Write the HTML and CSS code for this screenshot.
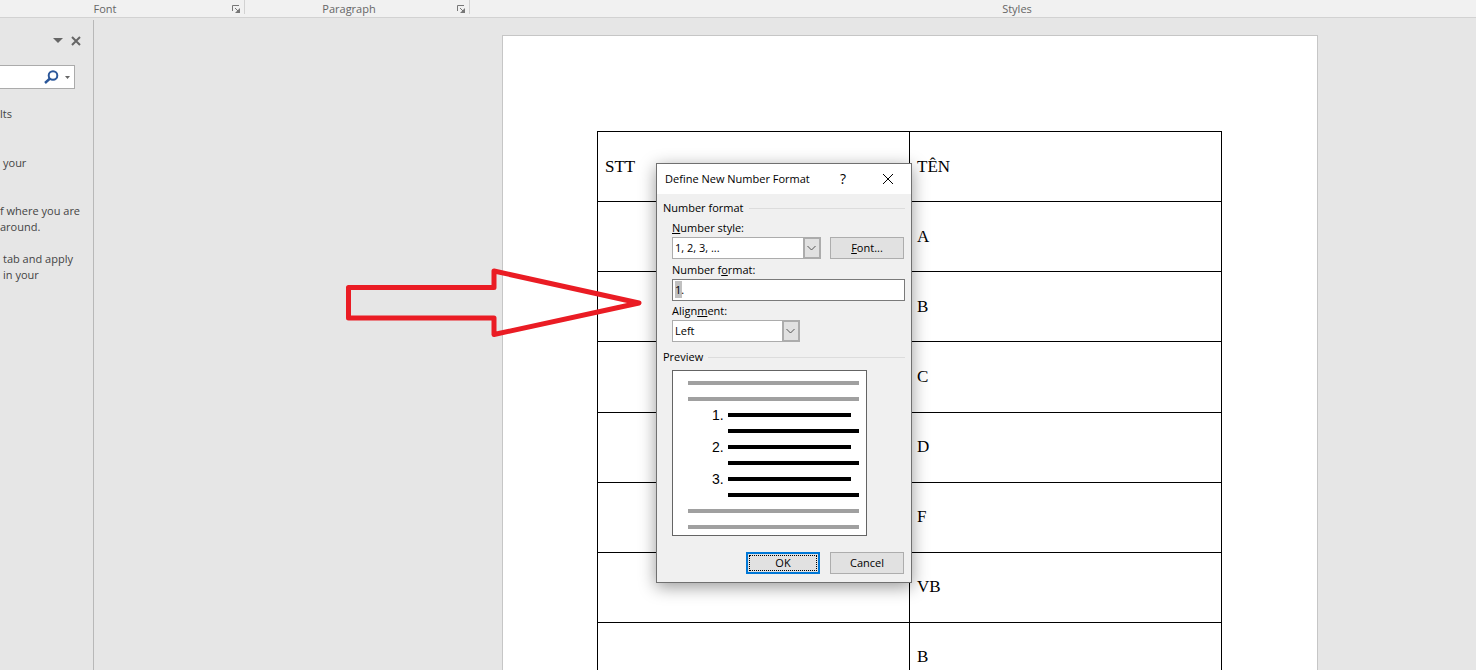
FILE: index.html
```html
<!DOCTYPE html>
<html lang="en">
<head>
<meta charset="utf-8">
<title>Document - Define New Number Format</title>
<link rel="stylesheet" href="styles.css">
</head>
<body>
<header class="ribbon">
  <div class="ribbon-group group-font"><span>Font</span>
    <button class="launcher" type="button" aria-label="Font settings"><svg width="8" height="8" viewBox="0 0 8 8"><path d="M.5 6V.5H7M3 3l3 3" fill="none" stroke="#777"/><path d="M8 3v5H3z" fill="#777"/></svg></button>
  </div>
  <div class="ribbon-group group-paragraph"><span>Paragraph</span>
    <button class="launcher" type="button" aria-label="Paragraph settings"><svg width="8" height="8" viewBox="0 0 8 8"><path d="M.5 6V.5H7M3 3l3 3" fill="none" stroke="#777"/><path d="M8 3v5H3z" fill="#777"/></svg></button>
  </div>
  <div class="ribbon-group group-styles"><span>Styles</span></div>
</header>
<main class="workspace">
  <aside class="nav-pane">
    <div class="pane-tools">
      <button class="pane-button" type="button" aria-label="Pane options"><svg width="10" height="6" viewBox="0 0 10 6"><path d="M0 0h10L5 5z" fill="#666"/></svg></button>
      <button class="pane-button" type="button" aria-label="Close pane"><svg width="10" height="10" viewBox="0 0 10 10"><path d="M1 1l8 8M9 1L1 9" stroke="#666" stroke-width="2"/></svg></button>
    </div>
    <div class="search">
      <input class="search-input" type="text" aria-label="Search document">
      <button class="pane-button" type="button" aria-label="Search"><svg width="15" height="14" viewBox="0 0 15 14"><circle cx="9" cy="5.500" r="4.300" fill="none" stroke="#2b579a" stroke-width="2"/><path d="M6 8.500L1 13" stroke="#2b579a" stroke-width="2.400"/></svg></button>
      <button class="pane-button" type="button" aria-label="Search options"><svg width="5" height="3" viewBox="0 0 5 3"><path d="M0 0h5L2.500 3z" fill="#666"/></svg></button>
    </div>
    <div class="pane-text">
      <p class="status">lts</p>
      <p class="hint indent">your</p>
      <p>f where you are<br>around.</p>
      <p class="indent">tab and apply<br>in your</p>
    </div>
  </aside>
  <section class="canvas">
    <article class="page">
      <table class="doc-table">
        <tbody>
          <tr><td>STT</td><td>TÊN</td></tr>
          <tr><td></td><td>A</td></tr>
          <tr><td></td><td>B</td></tr>
          <tr><td></td><td>C</td></tr>
          <tr><td></td><td>D</td></tr>
          <tr><td></td><td>F</td></tr>
          <tr><td></td><td>VB</td></tr>
          <tr><td></td><td>B</td></tr>
        </tbody>
      </table>
    </article>
  </section>
</main>
<svg class="arrow" width="300" height="72" viewBox="0 0 300 72" aria-hidden="true"><path d="M3.500 20.500H149V4L294 36 149 67.500V51H3.500z" fill="none" stroke="#ea1c24" stroke-width="5" stroke-linejoin="round"/></svg>
<form class="dialog" role="dialog" aria-labelledby="dialog-title">
  <div class="title-bar">
    <h1 class="title" id="dialog-title">Define New Number Format</h1>
    <button class="title-button" type="button">?</button>
    <button class="title-button close" type="button" aria-label="Close"><svg width="12" height="12" viewBox="0 0 12 12"><path d="M1 1l10 10M11 1L1 11" stroke="#000"/></svg></button>
  </div>
  <div class="dialog-body">
    <h2 class="group-title">Number format</h2>
    <div class="group">
      <label class="field-label" for="number-style"><u>N</u>umber style:</label>
      <div class="style-row">
        <div class="combo combo-style">
          <select class="combo-select" id="number-style"><option>1, 2, 3, ...</option></select>
          <svg class="combo-arrow" width="18" height="22" viewBox="0 0 18 22"><path d="M1 1h16v20H1z" fill="#e1e1e1" stroke="#acacac" stroke-width="2"/><path d="M4.500 9l4 4 4-4" fill="none" stroke="#555"/></svg>
        </div>
        <button class="push-button" type="button"><u>F</u>ont...</button>
      </div>
      <label class="field-label" for="number-format">Number f<u>o</u>rmat:</label>
      <input class="format-input" id="number-format" type="text" value="1.">
      <label class="field-label" for="alignment">Align<u>m</u>ent:</label>
      <div class="combo combo-align">
        <select class="combo-select" id="alignment"><option>Left</option></select>
        <svg class="combo-arrow" width="18" height="22" viewBox="0 0 18 22"><path d="M1 1h16v20H1z" fill="#e1e1e1" stroke="#acacac" stroke-width="2"/><path d="M4.500 9l4 4 4-4" fill="none" stroke="#555"/></svg>
      </div>
    </div>
    <h2 class="group-title">Preview</h2>
    <div class="preview">
      <div class="line"><i class="bar gray"></i></div>
      <div class="line"><i class="bar gray"></i></div>
      <div class="line"><span class="number">1.</span><i class="bar short"></i></div>
      <div class="line"><span class="number"></span><i class="bar"></i></div>
      <div class="line"><span class="number">2.</span><i class="bar short"></i></div>
      <div class="line"><span class="number"></span><i class="bar"></i></div>
      <div class="line"><span class="number">3.</span><i class="bar short"></i></div>
      <div class="line"><span class="number"></span><i class="bar"></i></div>
      <div class="line"><i class="bar gray"></i></div>
      <div class="line"><i class="bar gray"></i></div>
    </div>
    <div class="actions">
      <button class="push-button default" type="button"><span class="focus-ring">OK</span></button>
      <button class="push-button" type="button">Cancel</button>
    </div>
  </div>
</form>
</body>
</html>
```

FILE: styles.css
```css
* { box-sizing: border-box; }

body {
  margin: 0;
  height: 100vh;
  display: flex;
  flex-direction: column;
  overflow: hidden;
  position: relative;
  background: #e6e6e6;
  color: #000;
  font: 11px/16px "Open Sans", "Noto Sans", sans-serif;
}

button, input, select {
  font: inherit;
  color: inherit;
  margin: 0;
  padding: 0;
  border: 0;
  border-radius: 0;
  background: none;
}

svg { display: block; }
p { margin: 0; }

/* Ribbon footer */
.ribbon {
  display: flex;
  flex: none;
  height: 18px;
  background: #f1f1f1;
  border-bottom: 1px solid #d2d2d2;
  color: #666;
}
.ribbon-group {
  display: flex;
  align-items: center;
  justify-content: center;
  height: 14px;
  padding-top: 4px;
  border-right: 1px solid #d2d2d2;
}
.ribbon-group span { flex: 1; text-align: center; }
.launcher { padding-right: 4px; }
.group-font { width: 245px; }
.group-font span { padding-right: 22px; }
.group-paragraph { width: 225px; }
.group-paragraph span { padding-right: 4px; }
.group-styles { flex: 1; border-right: 0; }
.group-styles span { padding-left: 88px; }

/* Workspace */
.workspace { flex: 1; display: flex; min-height: 0; }
.nav-pane {
  flex: none;
  width: 94px;
  margin-top: 2px;
  padding-top: 14px;
  border-right: 1px solid #b8b8b8;
  color: #444;
}
.pane-tools {
  display: flex;
  justify-content: flex-end;
  align-items: center;
  gap: 8px;
  height: 14px;
  padding-right: 12px;
}
.search {
  display: flex;
  align-items: center;
  gap: 6px;
  width: 75px;
  height: 24px;
  margin-top: 17px;
  padding-right: 4px;
  background: #fff;
  border: 1px solid #ababab;
  border-left: 0;
}
.search-input { flex: 1; min-width: 0; }
.pane-text { margin-top: 17px; white-space: nowrap; }
.pane-text p { margin-bottom: 16px; }
.pane-text .status { margin-bottom: 33px; }
.pane-text .hint { margin-bottom: 32px; }
.indent { padding-left: 3px; }

.canvas { flex: 1; overflow: hidden; padding: 17px 0 0 408px; }
.page {
  width: 816px;
  min-height: 100%;
  padding: 95px 95px 0 94px;
  background: #fff;
  border: 1px solid #c6c6c6;
  border-bottom: 0;
}
.doc-table {
  width: 100%;
  height: 562px;
  table-layout: fixed;
  border-collapse: collapse;
  font: 17px/20px "Liberation Serif", serif;
}
.doc-table td { border: 1px solid #000; padding: 0 7px; }

.arrow { position: absolute; left: 345px; top: 267px; }

/* Dialog */
.dialog {
  position: absolute;
  left: 656px;
  top: 163px;
  width: 256px;
  background: #f0f0f0;
  border: 1px solid #707070;
  box-shadow: 0 4px 16px rgba(0, 0, 0, .4);
}
.title-bar {
  display: flex;
  align-items: center;
  height: 30px;
  padding-left: 8px;
  background: #fff;
}
.title { flex: 1; margin: 0; font-size: 11px; font-weight: 400; white-space: nowrap; }
.title-button { font-size: 14px; width: 24px; text-align: center; }
.close { width: 46px; margin-left: 10px; display: flex; justify-content: center; }
.dialog-body { padding: 6px 6px 8px; }
.group-title {
  display: flex;
  align-items: center;
  gap: 5px;
  margin: 0;
  font-size: 11px;
  font-weight: 400;
}
.group-title::after { content: ""; flex: 1; height: 1px; background: #dcdcdc; }
.group { display: flex; flex-direction: column; padding: 4px 0 7px 9px; }
.field-label { margin-bottom: 1px; }
.field-label:not(:first-child) { margin-top: 2px; }
.style-row { display: flex; justify-content: space-between; padding: 0 1px 1px 0; }
.combo { display: grid; height: 22px; }
.combo-style { width: 149px; }
.combo-align { width: 128px; }
.combo-select, .combo-arrow { grid-area: 1 / 1; }
.combo-select {
  appearance: none;
  padding: 0 20px 0 2px;
  background: #fff;
  border: 1px solid #acacac;
}
.combo-arrow { justify-self: end; pointer-events: none; }
.format-input {
  height: 22px;
  padding: 0 2px 2px;
  border: 1px solid #7a7a7a;
  background: linear-gradient(#c0c0c0, #c0c0c0) 2px 1px / 7px 17px no-repeat #fff;
}
.push-button {
  width: 74px;
  height: 22px;
  background: #e1e1e1;
  border: 1px solid #adadad;
}
.default { border: 2px solid #0078d7; padding: 1px; }
.focus-ring { display: block; height: 16px; line-height: 14px; border: 1px dotted #000; }
.preview {
  width: 195px;
  height: 166px;
  margin: 5px 0 0 9px;
  padding: 4px 7px 0 15px;
  background: #fff;
  border: 1px solid #646464;
}
.line { display: flex; align-items: center; height: 16px; }
.number {
  width: 40px;
  padding-left: 24px;
  font: 14px/16px "Liberation Sans", sans-serif;
}
.bar { flex: 1; height: 4px; background: #000; }
.gray { background: #a0a0a0; }
.short { margin-right: 8px; }
.actions { display: flex; justify-content: flex-end; gap: 10px; margin-top: 16px; padding-right: 1px; }
```
